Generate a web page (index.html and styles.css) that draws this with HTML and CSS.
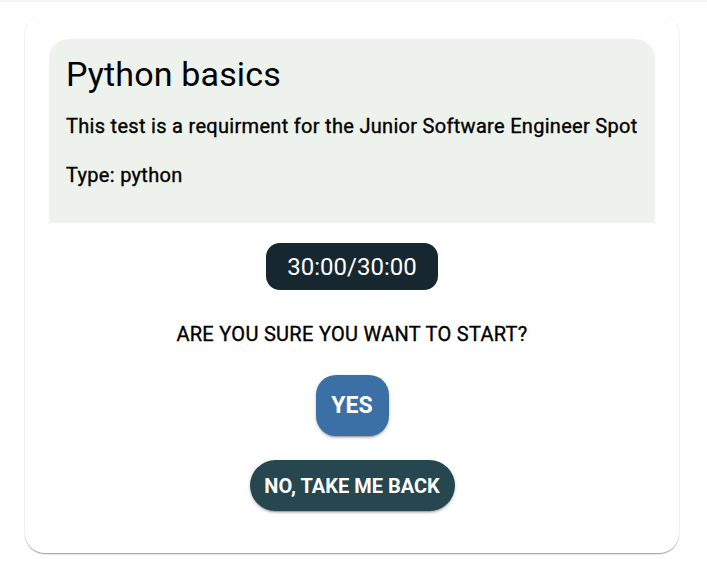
FILE: index.html
```html
<!DOCTYPE html>
<html lang="en">
<head>
<meta charset="utf-8">
<title>Python basics</title>
<link rel="stylesheet" href="styles.css">
</head>
<body>
<div class="topline"></div>
<main class="card">
  <section class="header">
    <h1 class="title">Python basics</h1>
    <p class="desc">This test is a requirment for the Junior Software Engineer Spot</p>
    <p class="type">Type: python</p>
  </section>
  <div class="actions">
    <div class="timer">30:00/30:00</div>
    <p class="question">ARE YOU SURE YOU WANT TO START?</p>
    <button class="btn yes">YES</button>
    <button class="btn back">NO, TAKE ME BACK</button>
  </div>
</main>
</body>
</html>
```

FILE: styles.css
```css
* { box-sizing: border-box; }
html, body { margin: 0; padding: 0; background: #ffffff; }
body {
  font-family: Roboto, "Liberation Sans", Arial, sans-serif;
  color: #000;
  width: 707px;
  height: 578px;
  overflow: hidden;
}
.topline {
  height: 2px;
  background: #f3f3f3;
}
.card {
  margin: 13px 0 0 25px;
  width: 654px;
  height: 538px;
  background: #fff;
  border-radius: 20px;
  padding: 24px 24px 0 24px;
  box-shadow: 0 2px 1px -1px rgba(0,0,0,0.2), 0 1px 1px 0 rgba(0,0,0,0.14), 0 1px 3px 0 rgba(0,0,0,0.12);
}
.header {
  background: #eef2ec;
  border-radius: 20px 20px 0 0;
  height: 184px;
  padding: 14px 16px 0 17px;
}
.title {
  margin: 0 0 15px 0;
  font-size: 34px;
  line-height: 42px;
  font-weight: 400;
  letter-spacing: 0.15px;
}
.desc, .type, .question {
  margin: 0;
  font-size: 20px;
  line-height: 32px;
  font-weight: 400;
  letter-spacing: 0.3px;
  -webkit-text-stroke: 0.35px currentColor;
}
.desc { margin-bottom: 17px; }
.actions {
  display: flex;
  flex-direction: column;
  align-items: center;
  padding-top: 20px;
}
.timer {
  height: 47px;
  padding: 0 21px;
  display: flex;
  align-items: center;
  background: #172730;
  color: #fff;
  font-size: 24px;
  border-radius: 14px;
}
.question {
  margin-top: 28px;
}
.btn {
  font-family: Roboto, "Liberation Sans", Arial, sans-serif;
  border: none;
  color: #fff;
  font-weight: 700;
  padding: 0;
  box-shadow: 0 3px 1px -2px rgba(0,0,0,0.2), 0 2px 2px 0 rgba(0,0,0,0.14), 0 1px 5px 0 rgba(0,0,0,0.12);
}
.yes {
  margin-top: 25px;
  height: 61px;
  width: 73px;
  background: #3b70a7;
  border-radius: 20px;
  font-size: 23px;
}
.back {
  margin-top: 24px;
  height: 51px;
  width: 205px;
  background: #26474f;
  border-radius: 26px;
  font-size: 20px;
}
```
